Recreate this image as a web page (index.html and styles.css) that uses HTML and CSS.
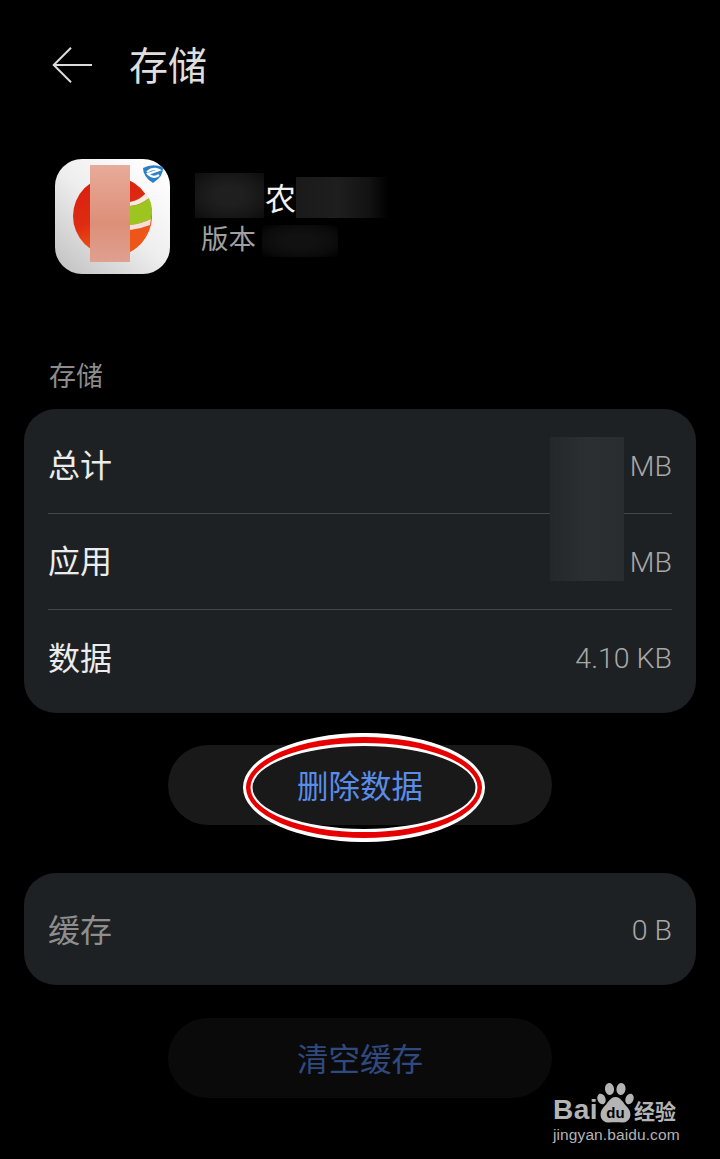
FILE: index.html
```html
<!DOCTYPE html>
<html lang="zh-CN">
<head>
  <meta charset="UTF-8">
  <meta name="viewport" content="width=device-width, initial-scale=1.0">
  <title>存储</title>
  <link rel="stylesheet" href="styles.css">
</head>
<body>
  <div class="page">
    <!-- 顶部 -->
    <header class="top-bar">
      <svg class="back-icon" width="40" height="36" viewBox="0 0 40 36">
        <path d="M19 0.700 L1.700 18 L19 35.300 M1.700 18 H40" fill="none" stroke="#dcdcdc" stroke-width="2"/>
      </svg>
      <h1 class="top-title">存储</h1>
    </header>

    <!-- 应用信息 -->
    <section class="app-info">
      <svg class="app-icon" width="115" height="115" viewBox="0 0 115 115">
        <defs>
          <linearGradient id="iconBg" x1="0.900" y1="0.050" x2="0.100" y2="0.950">
            <stop offset="0" stop-color="#ffffff"/>
            <stop offset="0.500" stop-color="#eeeeee"/>
            <stop offset="1" stop-color="#c6c6c6"/>
          </linearGradient>
          <linearGradient id="salmon" x1="0" y1="0" x2="0" y2="1">
            <stop offset="0" stop-color="#e8ab9a"/>
            <stop offset="0.600" stop-color="#dc8f78"/>
            <stop offset="1" stop-color="#dfa090"/>
          </linearGradient>
          <linearGradient id="ball" x1="0" y1="0" x2="0.300" y2="1">
            <stop offset="0" stop-color="#d81c10"/>
            <stop offset="0.600" stop-color="#de2c12"/>
            <stop offset="1" stop-color="#ee5a16"/>
          </linearGradient>
        </defs>
        <rect width="115" height="115" rx="27" fill="url(#iconBg)"/>
        <circle cx="57.500" cy="57" r="39.500" fill="url(#ball)"/>
        <path d="M75 70 L96 64 Q91 85 75 93 Z" fill="#ee5518"/>
        <path d="M75 43 Q85 41 91 34 L94 39 Q86 46 75 47 Z" fill="#f5e9e2"/>
        <path d="M75 47 Q86 46 94 39 Q99 50 96 60 Q86 65 75 66 Z" fill="#9cc520"/>
        <path d="M75 66 Q86 65 96 60 L95 66 Q85 70 75 71 Z" fill="#f4e0d8"/>
        <rect x="35" y="6" width="40" height="97" fill="url(#salmon)"/>
        <path d="M88 9 Q97 4 108 8 Q109 17 98 24 Q88 18 88 9 Z" fill="#2b80c6"/>
        <path d="M92 13 Q98 8 104 11 L93 15 Q98 20 104 16" fill="none" stroke="#fff" stroke-width="2.200"/>
      </svg>
      <div class="app-text">
        <div class="app-name">农</div>
        <div class="app-version">版本</div>
      </div>
      <div class="blur blur-name-left"></div>
      <div class="blur blur-name-right"></div>
      <div class="blur blur-version"></div>
    </section>

    <div class="section-label">存储</div>

    <!-- 存储明细 -->
    <section class="card">
      <div class="row">
        <span class="row-name">总计</span>
        <span class="row-value">MB</span>
      </div>
      <div class="row">
        <span class="row-name">应用</span>
        <span class="row-value">MB</span>
      </div>
      <div class="row row-last">
        <span class="row-name">数据</span>
        <span class="row-value">4.10 KB</span>
      </div>
      <div class="blur blur-size"></div>
    </section>

    <div class="btn-wrap">
      <button class="pill-btn" type="button">删除数据</button>
      <svg class="mark" width="242" height="109" viewBox="0 0 242 109">
        <path fill="#fff" fill-rule="evenodd" d="M0 54.500 A121 54.500 0 1 0 242 54.500 A121 54.500 0 1 0 0 54.500 Z M9.500 54.500 A111.500 41.500 0 1 1 232.500 54.500 A111.500 41.500 0 1 1 9.500 54.500 Z"/>
        <path fill="#e60000" fill-rule="evenodd" d="M3 54.500 A118 50.500 0 1 0 239 54.500 A118 50.500 0 1 0 3 54.500 Z M7.500 54.500 A113.500 44.500 0 1 1 234.500 54.500 A113.500 44.500 0 1 1 7.500 54.500 Z"/>
      </svg>
    </div>

    <section class="card">
      <div class="row row-last row-muted">
        <span class="row-name">缓存</span>
        <span class="row-value">0 B</span>
      </div>
    </section>

    <div class="btn-wrap btn-wrap-last">
      <button class="pill-btn pill-disabled" type="button" disabled>清空缓存</button>
    </div>

    <!-- 水印 -->
    <div class="watermark">
      <div class="wm-top">
        <span class="wm-bai">Bai</span>
        <svg class="wm-paw" width="37" height="40" viewBox="0 0 37 40">
          <ellipse cx="4.500" cy="16" rx="4" ry="5.500" fill="#b4b4b4" transform="rotate(-20 4.500 16)"/>
          <ellipse cx="12.500" cy="6" rx="4.500" ry="6" fill="#b4b4b4" transform="rotate(-8 12.500 6)"/>
          <ellipse cx="24" cy="6" rx="4.500" ry="6" fill="#b4b4b4" transform="rotate(8 24 6)"/>
          <ellipse cx="32.500" cy="16" rx="4" ry="5.500" fill="#b4b4b4" transform="rotate(20 32.500 16)"/>
          <path d="M18.500 14 C24 14 26 20 31 25 C36 31 33 40 25 39.500 C21 39 16 39 12 39.500 C4 40 1 31 6 25 C11 20 13 14 18.500 14 Z" fill="#b4b4b4"/>
          <text x="18.500" y="35" text-anchor="middle" class="wm-du">du</text>
        </svg>
        <span class="wm-jy">经验</span>
      </div>
      <div class="wm-url">jingyan.baidu.com</div>
    </div>
  </div>
</body>
</html>
```

FILE: styles.css
```css
/* 基础 */
* {
  box-sizing: border-box;
}

body {
  margin: 0;
  background-color: #000;
  font-family: "Noto Sans CJK SC", "Noto Sans", sans-serif;
  font-weight: 400;
}

.page {
  position: relative;
  width: 720px;
  height: 1159px;
  overflow: hidden;
  padding: 0 24px;
}

/* 顶部 */
.top-bar {
  display: flex;
  align-items: center;
  height: 132px;
  padding: 0 0 2px 28px;
}

.back-icon {
  flex: none;
}

.top-title {
  margin: 0 0 3px 37px;
  color: #dedede;
  font-size: 39px;
  font-weight: 400;
  line-height: 1;
}

/* 应用信息 */
.app-info {
  display: flex;
  align-items: center;
  height: 115px;
  margin-top: 27px;
  padding-left: 31px;
}

.app-icon {
  flex: none;
}

.app-text {
  margin-left: 31px;
}

.app-name {
  padding-left: 64px;
  color: #f2f2f2;
  font-size: 31px;
  line-height: 40px;
}

.app-version {
  color: #a0a0a0;
  font-size: 27.500px;
  line-height: 40px;
}

/* 打码区域 */
.blur {
  position: absolute;
}

.blur-name-left {
  left: 195px;
  top: 173px;
  width: 69px;
  height: 45px;
  background: radial-gradient(ellipse at center, #1f1f1f 30%, #161616 70%, #0c0c0c 100%);
}

.blur-name-right {
  left: 296px;
  top: 177px;
  width: 92px;
  height: 41px;
  background: linear-gradient(to right, #1a1a1a, #1e1e1e 45%, #121212 80%, #000);
}

.blur-version {
  left: 262px;
  top: 225px;
  width: 76px;
  height: 32px;
  background: radial-gradient(ellipse at center, #111 30%, #0b0b0b 70%, #000 100%);
}

.blur-size {
  left: 526px;
  top: 28px;
  width: 74px;
  height: 144px;
  background: linear-gradient(to right, #25282b, #2c2f32 50%, #2a2d30);
}

/* 分组标题 */
.section-label {
  height: 135px;
  padding: 83px 0 0 25px;
  color: #8c8c8c;
  font-size: 27px;
  line-height: 36px;
}

/* 卡片 */
.card {
  position: relative;
  padding: 9px 24px 7px;
  background-color: #1e2123;
  border-radius: 32px;
}

.row {
  display: flex;
  align-items: center;
  justify-content: space-between;
  height: 96px;
  border-bottom: 1px solid #43474a;
}

.row-last {
  border-bottom: none;
}

.row-name {
  padding-bottom: 5px;
  color: #ececec;
  font-size: 32px;
}

.row-value {
  padding-top: 1px;
  color: #a8a8a8;
  font-family: "Roboto", sans-serif;
  font-size: 28.500px;
  font-weight: 300;
}

.row-muted .row-name {
  color: #8e8e8e;
}

/* 按钮 */
.btn-wrap {
  position: relative;
  display: flex;
  justify-content: center;
  margin: 32px 0 48px;
}

.btn-wrap-last {
  margin: 33px 0 0;
}

.pill-btn {
  width: 384px;
  height: 80px;
  padding-bottom: 4px;
  border: none;
  border-radius: 40px;
  background-color: #191919;
  color: #5a8de8;
  font-family: inherit;
  font-size: 31.500px;
  font-weight: 400;
}

.pill-disabled {
  background-color: #0a0a0a;
  color: #304a80;
}

.mark {
  position: absolute;
  left: 219px;
  top: -12px;
}

/* 水印 */
.watermark {
  position: absolute;
  left: 553px;
  top: 1082px;
  width: 130px;
  color: #b4b4b4;
}

.wm-top {
  display: flex;
  align-items: flex-end;
  height: 41px;
}

.wm-bai {
  font-family: "Liberation Sans", sans-serif;
  font-size: 28px;
  font-weight: 700;
  letter-spacing: 0.500px;
  line-height: 26px;
}

.wm-paw {
  flex: none;
  margin-left: -1px;
}

.wm-du {
  fill: #000;
  font-family: "Liberation Sans", sans-serif;
  font-size: 15px;
  font-weight: 700;
}

.wm-jy {
  margin-left: 0;
  font-size: 21px;
  font-weight: 700;
  line-height: 26px;
}

.wm-url {
  font-family: "Liberation Sans", sans-serif;
  font-size: 15.500px;
  letter-spacing: 0.100px;
  line-height: 24px;
  white-space: nowrap;
}
```
